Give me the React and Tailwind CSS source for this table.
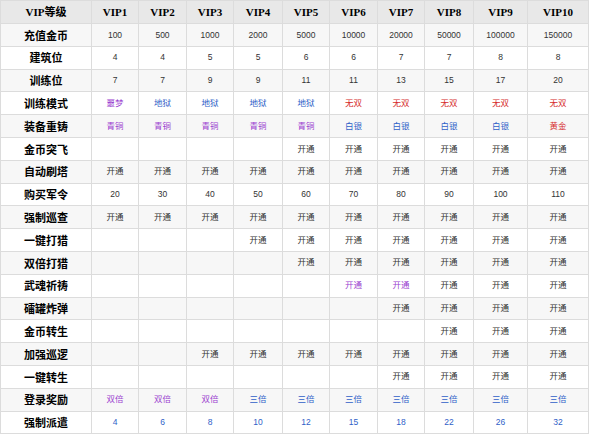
const purple = "text-[#9b3fd0]"
const blue = "text-[#2f5fc8]"
const red = "text-[#d62c2c]"

const heads = ["VIP1", "VIP2", "VIP3", "VIP4", "VIP5", "VIP6", "VIP7", "VIP8", "VIP9", "VIP10"]
const widths = ["w-[91px]", "w-[47px]", "w-[48px]", "w-[47px]", "w-[49px]", "w-[47px]", "w-[48px]", "w-[47px]", "w-[49px]", "w-[54px]", "w-[61px]"]

const K = "开通"
const rep = (n, v) => Array(n).fill(v)
const open = (from) => [...rep(from - 1, ""), ...rep(11 - from, K)]

const rows = [
  { name: "充值金币", cells: ["100", "500", "1000", "2000", "5000", "10000", "20000", "50000", "100000", "150000"] },
  { name: "建筑位", cells: ["4", "4", "5", "5", "6", "6", "7", "7", "8", "8"] },
  { name: "训练位", cells: ["7", "7", "9", "9", "11", "11", "13", "15", "17", "20"] },
  {
    name: "训练模式",
    cells: ["噩梦", ...rep(4, "地狱"), ...rep(5, "无双")],
    colors: [purple, ...rep(4, blue), ...rep(5, red)],
  },
  {
    name: "装备重铸",
    cells: [...rep(5, "青铜"), ...rep(4, "白银"), "黄金"],
    colors: [...rep(5, purple), ...rep(4, blue), red],
  },
  { name: "金币突飞", cells: open(5) },
  { name: "自动刷塔", cells: open(1) },
  { name: "购买军令", cells: ["20", "30", "40", "50", "60", "70", "80", "90", "100", "110"] },
  { name: "强制巡查", cells: open(1) },
  { name: "一键打猎", cells: open(4) },
  { name: "双倍打猎", cells: open(5) },
  { name: "武魂祈祷", cells: open(6), colors: [...rep(5, ""), purple, purple] },
  { name: "礌罐炸弹", cells: open(7) },
  { name: "金币转生", cells: open(8) },
  { name: "加强巡逻", cells: open(3) },
  { name: "一键转生", cells: open(7) },
  {
    name: "登录奖励",
    cells: [...rep(3, "双倍"), ...rep(7, "三倍")],
    colors: [...rep(3, purple), ...rep(7, blue)],
  },
  { name: "强制派遣", cells: ["4", "6", "8", "10", "12", "15", "18", "22", "26", "32"], colors: rep(10, blue) },
]

export default function App() {
  return (
    <div className="w-[590px] h-[435px] bg-white overflow-hidden">
      <table className="table-fixed border-collapse w-[589px] text-center">
        <colgroup>
          {widths.map((w, i) => (
            <col key={i} className={w} />
          ))}
        </colgroup>
        <thead>
          <tr className="h-[23px] bg-[#e8e8e8]">
            <th className="border border-[#dcdcdc] p-0 text-[11px] font-bold text-black font-['Liberation_Serif','Noto_Sans_CJK_SC',serif]">
              VIP等级
            </th>
            {heads.map((h) => (
              <th
                key={h}
                className="border border-[#dcdcdc] p-0 text-[11px] font-bold text-black font-['Liberation_Serif',serif]"
              >
                {h}
              </th>
            ))}
          </tr>
        </thead>
        <tbody>
          {rows.map((r, i) => (
            <tr key={r.name} className={i % 2 === 0 ? "h-[22.8px] bg-[#f7f7f7]" : "h-[22.8px] bg-white"}>
              <td className="border border-[#dcdcdc] p-0 text-[11px] font-bold text-black font-['Noto_Sans_CJK_SC',sans-serif]">
                {r.name}
              </td>
              {r.cells.map((c, j) => (
                <td
                  key={j}
                  className={
                    "border border-[#dcdcdc] p-0 text-[8.5px] font-['Liberation_Sans','Noto_Sans_CJK_SC',sans-serif] " +
                    ((r.colors && r.colors[j]) || "text-[#333]")
                  }
                >
                  {c}
                </td>
              ))}
            </tr>
          ))}
        </tbody>
      </table>
    </div>
  )
}
